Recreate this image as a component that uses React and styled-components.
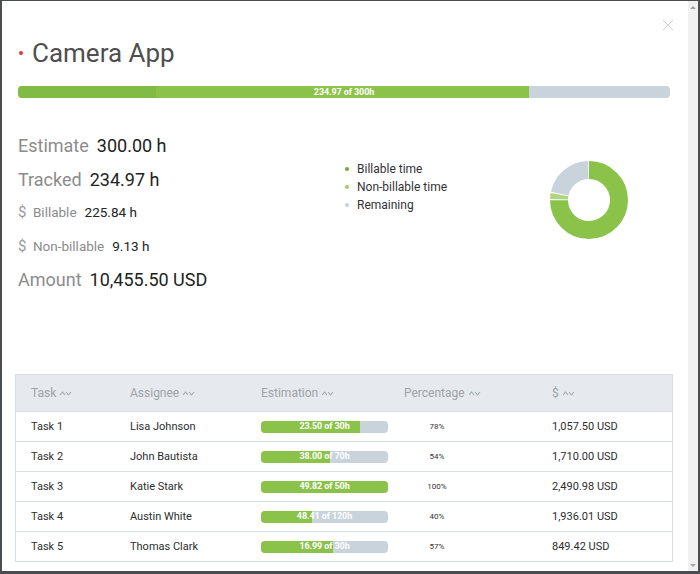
import styled, { createGlobalStyle } from 'styled-components';

const GlobalStyle = createGlobalStyle`
  html, body { margin: 0; padding: 0; background: #fff; }
  body { font-family: Roboto, "Liberation Sans", Arial, sans-serif; }
  * { box-sizing: border-box; }
`;

const Frame = styled.div`
  width: 700px;
  height: 574px;
  display: flex;
  border-style: solid;
  border-color: #4a4d4f;
  border-width: 1px 2px 3px 2px;
  background: #fff;
  overflow: hidden;
`;

const Main = styled.div`
  position: relative;
  flex: 1;
  padding: 37px 16px 0 16px;
`;

const Scrollbar = styled.div`
  width: 10px;
  background: #f1f1f1;
  display: flex;
  flex-direction: column;
  justify-content: space-between;
  align-items: center;
  padding: 5px 0 4px;
`;

const Arrow = styled.span`
  width: 0;
  height: 0;
  border-left: 3px solid transparent;
  border-right: 3px solid transparent;
  ${p => p.down ? 'border-top: 3px solid #a3a3a3;' : 'border-bottom: 3px solid #a3a3a3;'}
`;

const CloseButton = styled.button`
  position: absolute;
  top: 18px;
  right: 14px;
  width: 12px;
  height: 12px;
  padding: 0;
  border: none;
  background: none;
  cursor: pointer;
  display: flex;
`;

const TitleRow = styled.div`
  display: flex;
  align-items: center;
  gap: 9px;
  padding-left: 1px;
`;

const Dot = styled.span`
  width: 4px;
  height: 4px;
  border-radius: 50%;
  background: ${p => p.color};
  flex-shrink: 0;
`;

const Title = styled.h1`
  margin: 0;
  font-size: 26px;
  line-height: 30px;
  font-weight: 400;
  color: #4f4f4f;
`;

const Bar = styled.div`
  position: relative;
  height: ${p => p.h}px;
  border-radius: 4px;
  background: #c8d3db;
  overflow: hidden;
  display: flex;
  align-items: center;
  justify-content: center;
`;

const MainBar = styled(Bar)`
  margin: 18px 2px 0 0;
`;

const Fill = styled.div`
  position: absolute;
  left: 0;
  top: 0;
  bottom: 0;
  background: #8bc34a;
`;

const BarLabel = styled.span`
  position: relative;
  color: #fff;
  font-size: 9px;
  font-weight: 700;
  letter-spacing: -0.1px;
  line-height: 1;
`;

const Summary = styled.div`
  display: flex;
  margin-top: 31px;
`;

const Stats = styled.div`
  width: 327px;
  display: flex;
  flex-direction: column;
`;

const StatRow = styled.div`
  height: 33.5px;
  display: flex;
  align-items: baseline;
  gap: 8px;
  line-height: 33.5px;
`;

const StatLabel = styled.span`
  color: #8c8c8c;
  font-size: ${p => p.small ? 13.5 : 18}px;
`;

const StatValue = styled.span`
  color: #222;
  font-size: ${p => p.small ? 13.5 : 18}px;
`;

const Dollar = styled.span`
  color: #9a9a9a;
  font-size: 15px;
  margin-right: 6.5px;
`;

const Legend = styled.ul`
  flex: 1;
  list-style: none;
  margin: 0;
  padding: 31px 0 0 0;
`;

const LegendItem = styled.li`
  display: flex;
  align-items: center;
  gap: 8px;
  height: 18px;
  font-size: 12px;
  color: #333;
`;

const Donut = styled.svg`
  margin-top: 31px;
  margin-right: 43px;
  flex-shrink: 0;
`;

const Table = styled.div`
  margin: 77.5px -1px 0 -3px;
  border: 1px solid #d6dde3;
`;

const columns = '99px 131px 143px 148px 1fr';

const HeadRow = styled.div`
  display: grid;
  grid-template-columns: ${columns};
  height: 36px;
  align-items: center;
  padding-left: 15px;
  background: #e6eaee;
`;

const HeadCell = styled.div`
  display: flex;
  align-items: center;
  gap: 3px;
  font-size: 12px;
  color: #9da3a8;
`;

const Row = styled.div`
  display: grid;
  grid-template-columns: ${columns};
  height: 30px;
  align-items: center;
  padding-left: 15px;
  border-top: 1px solid #d6dde3;
  font-size: 11px;
  color: #2d2d2d;
`;

const RowBar = styled(Bar)`
  width: 127px;
`;

const Percent = styled.div`
  width: 66px;
  text-align: center;
  font-size: 8px;
  color: #333;
`;

const SortIcon = () => (
  <svg width="13" height="7" viewBox="0 0 13 7" fill="none" stroke="#a3a9ae" strokeWidth="1.1">
    <polyline points="1,5 3.5,2 6,5" />
    <polyline points="7,2 9.5,5 12,2" />
  </svg>
);

const tasks = [
  { name: 'Task 1', who: 'Lisa Johnson', done: 23.5, est: 30, usd: '1,057.50 USD' },
  { name: 'Task 2', who: 'John Bautista', done: 38.0, est: 70, usd: '1,710.00 USD' },
  { name: 'Task 3', who: 'Katie Stark', done: 49.82, est: 50, usd: '2,490.98 USD' },
  { name: 'Task 4', who: 'Austin White', done: 48.41, est: 120, usd: '1,936.01 USD' },
  { name: 'Task 5', who: 'Thomas Clark', done: 16.99, est: 30, usd: '849.42 USD' },
];

const billable = 225.84;
const nonBillable = 9.13;
const estimate = 300;

const DonutChart = () => {
  const r = 30;
  const c = 2 * Math.PI * r;
  const parts = [
    { v: billable, color: '#8bc34a' },
    { v: nonBillable, color: '#aed581' },
    { v: estimate - billable - nonBillable, color: '#c8d3db' },
  ];
  let start = 0;
  return (
    <Donut width="80" height="80" viewBox="0 0 80 80">
      <g transform="rotate(-90 40 40)">
        {parts.map((p, i) => {
          const len = (p.v / estimate) * c;
          const el = (
            <circle
              key={i}
              cx="40"
              cy="40"
              r={r}
              fill="none"
              stroke={p.color}
              strokeWidth="18"
              strokeDasharray={`${len - 1} ${c}`}
              strokeDashoffset={-start}
            />
          );
          start += len;
          return el;
        })}
      </g>
    </Donut>
  );
};

const App = () => {
  const tracked = billable + nonBillable;
  const mainPct = Math.round((tracked / estimate) * 1000) / 10;

  return (
    <>
      <GlobalStyle />
      <Frame>
        <Main>
          <CloseButton aria-label="Close">
            <svg width="12" height="12" viewBox="0 0 12 12" stroke="#cfcfcf" strokeWidth="1">
              <line x1="1" y1="1" x2="11" y2="11" />
              <line x1="11" y1="1" x2="1" y2="11" />
            </svg>
          </CloseButton>

          <TitleRow>
            <Dot color="#e53935" />
            <Title>Camera App</Title>
          </TitleRow>

          <MainBar h={12}>
            <Fill
              style={{
                width: `${mainPct}%`,
                background: 'linear-gradient(to right, #80bb45 0 27%, #8bc34a 27% 100%)',
              }}
            />
            <BarLabel>234.97 of 300h</BarLabel>
          </MainBar>

          <Summary>
            <Stats>
              <StatRow>
                <StatLabel>Estimate</StatLabel>
                <StatValue>300.00 h</StatValue>
              </StatRow>
              <StatRow>
                <StatLabel>Tracked</StatLabel>
                <StatValue>234.97 h</StatValue>
              </StatRow>
              <StatRow>
                <StatLabel small><Dollar>$</Dollar>Billable</StatLabel>
                <StatValue small>225.84 h</StatValue>
              </StatRow>
              <StatRow>
                <StatLabel small><Dollar>$</Dollar>Non-billable</StatLabel>
                <StatValue small>9.13 h</StatValue>
              </StatRow>
              <StatRow>
                <StatLabel>Amount</StatLabel>
                <StatValue>10,455.50 USD</StatValue>
              </StatRow>
            </Stats>

            <Legend>
              <LegendItem><Dot color="#6aae35" />Billable time</LegendItem>
              <LegendItem><Dot color="#9fcf6a" />Non-billable time</LegendItem>
              <LegendItem><Dot color="#c5d0d9" />Remaining</LegendItem>
            </Legend>

            <DonutChart />
          </Summary>

          <Table>
            <HeadRow>
              <HeadCell>Task <SortIcon /></HeadCell>
              <HeadCell>Assignee <SortIcon /></HeadCell>
              <HeadCell>Estimation <SortIcon /></HeadCell>
              <HeadCell>Percentage <SortIcon /></HeadCell>
              <HeadCell>$ <SortIcon /></HeadCell>
            </HeadRow>
            {tasks.map(t => {
              const pct = Math.min(100, Math.round((t.done / t.est) * 100));
              return (
                <Row key={t.name}>
                  <div>{t.name}</div>
                  <div>{t.who}</div>
                  <RowBar h={12}>
                    <Fill style={{ width: `${pct}%` }} />
                    <BarLabel>{t.done.toFixed(2)} of {t.est}h</BarLabel>
                  </RowBar>
                  <Percent>{pct}%</Percent>
                  <div>{t.usd}</div>
                </Row>
              );
            })}
          </Table>
        </Main>
        <Scrollbar>
          <Arrow />
          <Arrow down />
        </Scrollbar>
      </Frame>
    </>
  );
};

export default App;
